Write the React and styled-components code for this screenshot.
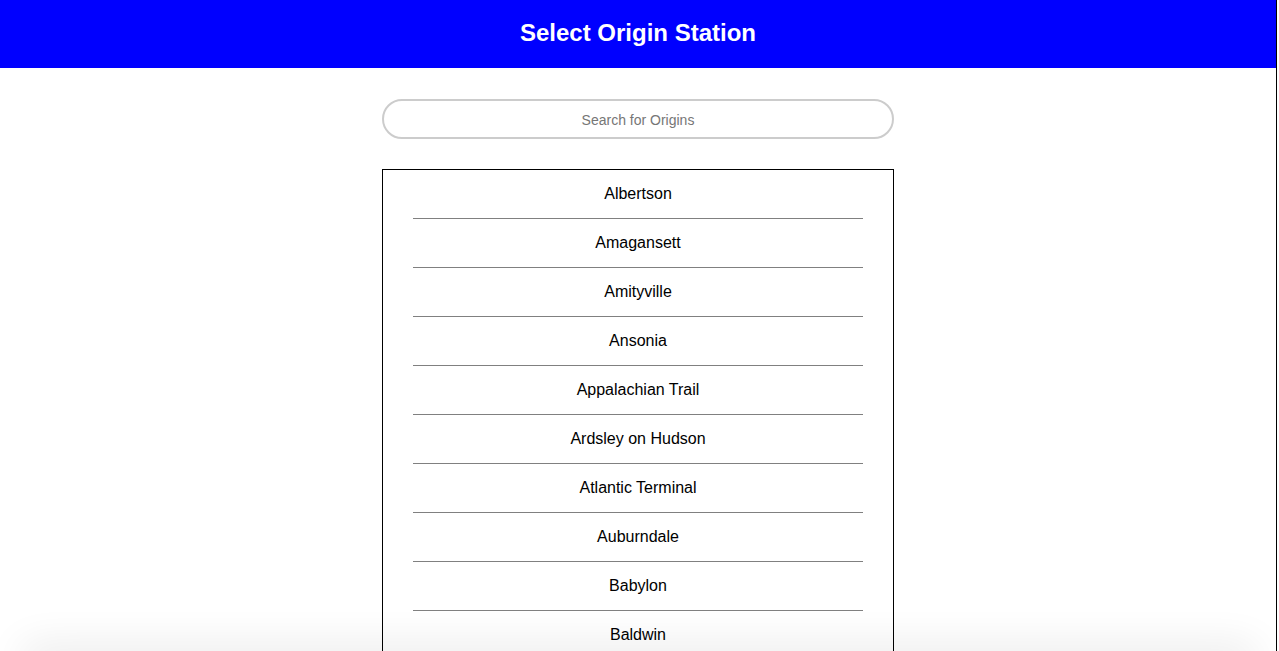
import styled, { createGlobalStyle } from 'styled-components';

const stations = [
  'Albertson',
  'Amagansett',
  'Amityville',
  'Ansonia',
  'Appalachian Trail',
  'Ardsley on Hudson',
  'Atlantic Terminal',
  'Auburndale',
  'Babylon',
  'Baldwin',
  'Bay Shore',
  'Bayside',
  'Beacon',
];

function App() {
  return (
    <Page>
      <GlobalStyle />
      <Header>
        <Title>Select Origin Station</Title>
      </Header>
      <Main>
        <Search placeholder="Search for Origins" />
        <StationList>
          {stations.map((name) => (
            <Station key={name}>{name}</Station>
          ))}
        </StationList>
      </Main>
      <BottomShade />
    </Page>
  );
}

const GlobalStyle = createGlobalStyle`
  html, body {
    margin: 0;
    padding: 0;
    background: #fff;
    font-family: "Liberation Sans", Arial, Helvetica, sans-serif;
  }
`;

const Page = styled.div`
  width: 1276px;
  border-right: 1px solid #000;
  min-height: 100vh;
`;

const Header = styled.header`
  height: 68px;
  background: #0000ff;
  display: flex;
  align-items: center;
  justify-content: center;
`;

const Title = styled.h1`
  margin: 0 0 2px;
  color: #fff;
  font-size: 24px;
  font-weight: bold;
`;

const Main = styled.main`
  display: flex;
  flex-direction: column;
  align-items: center;
  padding-top: 31px;
  gap: 30px;
`;

const Search = styled.input`
  box-sizing: border-box;
  width: 512px;
  height: 40px;
  border: 2px solid #cccccc;
  border-radius: 20px;
  text-align: center;
  font-family: "Liberation Sans", Arial, sans-serif;
  font-size: 14px;
  padding-top: 2px;
  outline: none;

  &::placeholder {
    color: #767676;
  }
`;

const StationList = styled.ul`
  box-sizing: border-box;
  width: 512px;
  margin: 0;
  padding: 0;
  list-style: none;
  border: 1px solid #000;
`;

const Station = styled.li`
  margin: 0 30px;
  height: 48px;
  display: flex;
  align-items: center;
  justify-content: center;
  font-size: 16px;
  color: #000;
  border-bottom: 1px solid #808080;

  &:last-child {
    border-bottom: none;
  }
`;

const BottomShade = styled.div`
  position: fixed;
  left: 20px;
  right: 20px;
  bottom: -30px;
  height: 30px;
  border-radius: 40px;
  box-shadow: 0 -6px 40px rgba(0, 0, 0, 0.09);
  pointer-events: none;
`;

export default App;
